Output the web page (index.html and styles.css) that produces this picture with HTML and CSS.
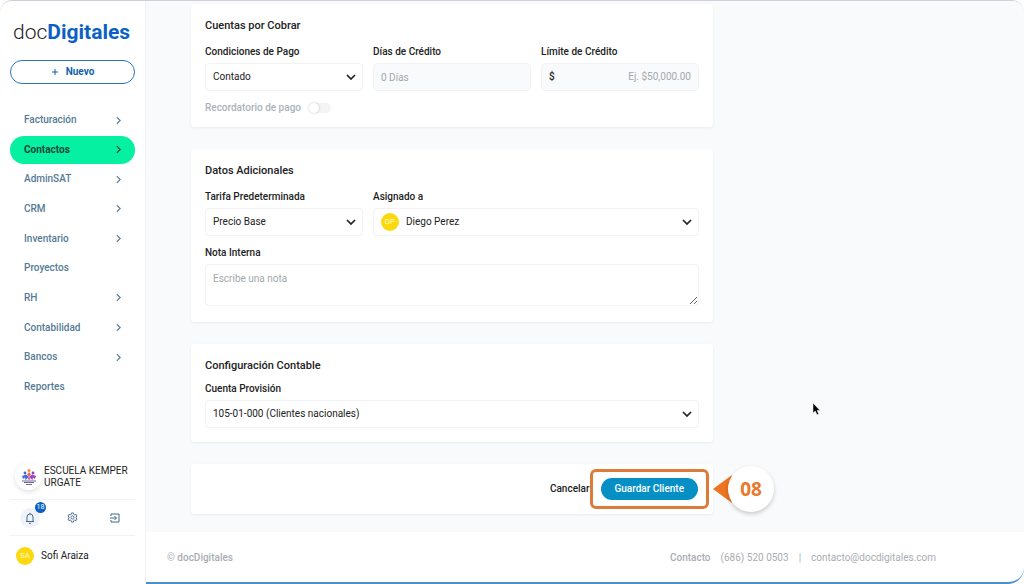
FILE: index.html
```html
<!DOCTYPE html>
<html lang="es">
<head>
  <meta charset="UTF-8">
  <meta name="viewport" content="width=device-width, initial-scale=1.0">
  <title>docDigitales</title>
  <link rel="stylesheet" href="styles.css">
</head>
<body>
  <div class="app">
    <aside class="sidebar">
      <a href="#" class="logo">doc<b>Digitales</b></a>
      <button type="button" class="new-btn">
        <svg width="8" height="8" viewBox="0 0 8 8"><path d="M4 1v6M1 4h6"/></svg>
        Nuevo
      </button>

      <nav class="menu">
        <a href="#" class="menu-item">Facturación <svg class="chevron" viewBox="0 0 6 10"><path d="M1 1l4 4-4 4"/></svg></a>
        <a href="#" class="menu-item active">Contactos <svg class="chevron" viewBox="0 0 6 10"><path d="M1 1l4 4-4 4"/></svg></a>
        <a href="#" class="menu-item">AdminSAT <svg class="chevron" viewBox="0 0 6 10"><path d="M1 1l4 4-4 4"/></svg></a>
        <a href="#" class="menu-item">CRM <svg class="chevron" viewBox="0 0 6 10"><path d="M1 1l4 4-4 4"/></svg></a>
        <a href="#" class="menu-item">Inventario <svg class="chevron" viewBox="0 0 6 10"><path d="M1 1l4 4-4 4"/></svg></a>
        <a href="#" class="menu-item">Proyectos</a>
        <a href="#" class="menu-item">RH <svg class="chevron" viewBox="0 0 6 10"><path d="M1 1l4 4-4 4"/></svg></a>
        <a href="#" class="menu-item">Contabilidad <svg class="chevron" viewBox="0 0 6 10"><path d="M1 1l4 4-4 4"/></svg></a>
        <a href="#" class="menu-item">Bancos <svg class="chevron" viewBox="0 0 6 10"><path d="M1 1l4 4-4 4"/></svg></a>
        <a href="#" class="menu-item">Reportes</a>
      </nav>

      <div class="company">
        <span class="company-logo">
          <svg width="14" height="16" viewBox="0 0 14 16">
            <circle cx="7" cy="1.500" r="1.500" fill="#f0913c"/>
            <circle cx="3" cy="4" r="1.400" fill="#4a63d8"/>
            <circle cx="11" cy="4" r="1.400" fill="#8a3fc0"/>
            <path d="M7 3l2 2.500L7 8 5 5.500z" fill="#e9694a"/>
            <path d="M0 7l4-1.500L7 8l-3.500 3L3 8.500 1 10z" fill="#3f6fe0"/>
            <path d="M14 7l-4-1.500L7 8l3.500 3 .5-2.500 2 1.500z" fill="#a83cc4"/>
            <path d="M7 8l1.500 2.500h-3z" fill="#e0457c"/>
            <path d="M0 11.500h14v1H0zM2 13h10v1H2zM4 15h6v1H4z" fill="#6d6898"/>
          </svg>
        </span>
        <span class="company-name">ESCUELA KEMPER URGATE</span>
      </div>

      <div class="tools">
        <button type="button" class="tool bell" aria-label="Notificaciones">
          <svg width="10" height="12" viewBox="0 0 10 12"><path d="M1 9.500h8M2 9.500V5a3 3 0 0 1 6 0v4.500M5 2V.8M4 11.300h2"/></svg>
          <span class="badge">18</span>
        </button>
        <button type="button" class="tool" aria-label="Ajustes">
          <svg width="11" height="11" viewBox="0 0 24 24"><g stroke-width="2"><circle cx="12" cy="12" r="3.500"/><path d="M10 2h4l.6 3 2.400 1.400 2.900-1 2 3.400-2.300 2v2.400l2.300 2-2 3.400-2.900-1-2.400 1.400-.6 3h-4l-.6-3L7 17.600l-2.900 1-2-3.400 2.300-2v-2.400l-2.300-2 2-3.400 2.900 1L9.400 5z"/></g></svg>
        </button>
        <button type="button" class="tool" aria-label="Salir">
          <svg width="10" height="10" viewBox="0 0 10 10"><path d="M1 3V1h8v8H1V7M0 5h6M4.500 3l2 2-2 2"/></svg>
        </button>
      </div>

      <div class="user">
        <span class="avatar">SA</span>
        <span>Sofi Araiza</span>
      </div>
    </aside>

    <div class="content">
      <main class="main">
        <form class="form">
          <section class="card">
            <h2 class="card-title">Cuentas por Cobrar</h2>
            <div class="grid">
              <div class="field">
                <label for="condiciones">Condiciones de Pago</label>
                <div class="select-wrap">
                  <select id="condiciones" class="control"><option>Contado</option></select>
                  <svg class="arrow" viewBox="0 0 10 6"><path d="M1 1l4 4 4-4"/></svg>
                </div>
              </div>
              <div class="field">
                <label for="dias">Días de Crédito</label>
                <input id="dias" class="control" type="text" placeholder="0 Días" disabled>
              </div>
              <div class="field">
                <label for="limite">Límite de Crédito</label>
                <div class="control money">
                  <span>$</span>
                  <input id="limite" type="text" placeholder="Ej. $50,000.00" disabled>
                </div>
              </div>
            </div>
            <div class="reminder">
              <label for="recordatorio">Recordatorio de pago</label>
              <input id="recordatorio" class="switch" type="checkbox" disabled>
            </div>
          </section>

          <section class="card">
            <h2 class="card-title">Datos Adicionales</h2>
            <div class="grid">
              <div class="field">
                <label for="tarifa">Tarifa Predeterminada</label>
                <div class="select-wrap">
                  <select id="tarifa" class="control"><option>Precio Base</option></select>
                  <svg class="arrow" viewBox="0 0 10 6"><path d="M1 1l4 4 4-4"/></svg>
                </div>
              </div>
              <div class="field wide">
                <label for="asignado">Asignado a</label>
                <div class="select-wrap with-avatar">
                  <span class="avatar">DP</span>
                  <select id="asignado" class="control"><option>Diego Perez</option></select>
                  <svg class="arrow" viewBox="0 0 10 6"><path d="M1 1l4 4 4-4"/></svg>
                </div>
              </div>
              <div class="field full">
                <label for="nota">Nota Interna</label>
                <textarea id="nota" class="control note" placeholder="Escribe una nota"></textarea>
              </div>
            </div>
          </section>

          <section class="card compact">
            <h2 class="card-title">Configuración Contable</h2>
            <div class="field">
              <label for="cuenta">Cuenta Provisión</label>
              <div class="select-wrap">
                <select id="cuenta" class="control"><option>105-01-000 (Clientes nacionales)</option></select>
                <svg class="arrow" viewBox="0 0 10 6"><path d="M1 1l4 4 4-4"/></svg>
              </div>
            </div>
          </section>

          <section class="card actions">
            <button type="button" class="cancel-btn">Cancelar</button>
            <div class="highlight">
              <button type="submit" class="save-btn">Guardar Cliente</button>
            </div>
            <div class="step">
              <svg class="step-arrow" width="20" height="28" viewBox="0 0 20 28"><path d="M0 14L19 0q-4 14 0 28z"/></svg>
              <span class="step-number">08</span>
            </div>
          </section>
        </form>

        <svg class="cursor" width="10" height="14" viewBox="0 0 10 14"><path d="M1 1v10l2.300-2 1.700 3.800 1.800-.8-1.700-3.600H8z"/></svg>
      </main>

      <footer class="footer">
        <strong>© docDigitales</strong>
        <div class="contact">
          <strong>Contacto</strong>
          <span>(686) 520 0503</span>
          <span>|</span>
          <a href="mailto:contacto@docdigitales.com">contacto@docdigitales.com</a>
        </div>
      </footer>
    </div>
  </div>
</body>
</html>
```
FILE: styles.css
```css
* {
  margin: 0;
  padding: 0;
  box-sizing: border-box;
}

body {
  font-family: Roboto, sans-serif;
  font-size: 10px;
  line-height: 14px;
  background: #fff;
  color: #222;
}

button,
input,
select,
textarea {
  font: inherit;
  color: inherit;
}

button {
  border: none;
  background: none;
  cursor: pointer;
}

a {
  color: inherit;
  text-decoration: none;
}

svg {
  fill: none;
  stroke: currentColor;
}

.app {
  display: flex;
  min-height: 100vh;
  border-top: 1px solid #d0cfdb;
  border-radius: 12px;
}

/* Sidebar */
.sidebar {
  display: flex;
  flex-direction: column;
  flex: 0 0 146px;
  padding: 15px 10px 14px;
  border-right: 1px solid #f0f2f4;
}

.logo {
  padding-left: 3px;
  font-size: 21px;
  font-weight: 300;
  line-height: 32px;
  white-space: nowrap;
}

.logo b {
  color: #0b61c3;
  font-weight: 700;
}

.new-btn {
  display: flex;
  align-items: center;
  justify-content: center;
  gap: 7px;
  height: 24px;
  margin-top: 12px;
  border: 1px solid #2f73b8;
  border-radius: 12px;
  color: #1262ae;
  font-weight: 700;
}

.menu {
  display: flex;
  flex: 1;
  flex-direction: column;
  justify-content: space-between;
  margin: 22px 0 62px;
}

.menu-item {
  display: flex;
  align-items: center;
  justify-content: space-between;
  height: 28px;
  padding: 0 14px;
  border-radius: 14px;
  color: #557a96;
  font-weight: 500;
}

.menu-item.active {
  background: #05f0a0;
  color: #10453a;
  font-weight: 700;
}

.chevron {
  width: 5px;
  height: 9px;
  stroke-width: 1.4;
}

.company {
  display: flex;
  align-items: center;
  gap: 2px;
  padding: 0 0 9px 5px;
  line-height: 12px;
}

.company-logo {
  display: flex;
  flex: none;
  align-items: center;
  justify-content: center;
  width: 27px;
  height: 27px;
  border-radius: 50%;
  box-shadow: 0 2px 5px rgba(0, 0, 0, 0.12);
}

.company-logo svg {
  stroke: none;
}

.tools {
  display: flex;
  align-items: center;
  justify-content: space-between;
  height: 37px;
  padding: 0 10px;
  border-top: 1px solid #f0f2f4;
  border-bottom: 1px solid #f0f2f4;
}

.tool {
  display: flex;
  position: relative;
  align-items: center;
  justify-content: center;
  width: 20px;
  height: 20px;
  border-radius: 50%;
  color: #3f6a8e;
}

.bell {
  background: #eff3f8;
}

.badge {
  position: absolute;
  top: -6px;
  right: -6px;
  width: 11px;
  height: 11px;
  border-radius: 50%;
  background: #0b61c3;
  color: #fff;
  font-size: 7px;
  line-height: 11px;
}

.user {
  display: flex;
  align-items: center;
  gap: 7px;
  padding: 11px 0 5px 6px;
}

.avatar {
  flex: none;
  width: 18px;
  height: 18px;
  border-radius: 50%;
  background: #fbd90e;
  color: #fff8c8;
  font-size: 8px;
  line-height: 18px;
  text-align: center;
}

/* Form */
.content {
  display: flex;
  flex: 1;
  flex-direction: column;
}

.main {
  position: relative;
  flex: 1;
  padding: 3px 45px 18px;
  border-top-right-radius: 12px;
  background: #f8fafc;
}

.form {
  display: flex;
  flex-direction: column;
  gap: 22px;
  max-width: 522px;
}

.card {
  padding: 13px 14px 12px;
  border-radius: 4px;
  background: #fff;
  box-shadow: 0 1px 3px rgba(40, 60, 80, 0.07);
}

.card-title {
  margin-bottom: 10px;
  font-size: 11px;
  font-weight: 500;
  line-height: 18px;
}

.compact {
  padding-bottom: 14px;
}

.compact .card-title {
  margin-bottom: 7px;
}

.grid {
  display: grid;
  grid-template-columns: repeat(3, 1fr);
  gap: 10px;
}

.wide {
  grid-column: span 2;
}

.full {
  grid-column: span 3;
}

.field label {
  display: block;
  margin-bottom: 4px;
  font-weight: 500;
}

.control {
  display: block;
  width: 100%;
  height: 28px;
  padding: 0 7px;
  border: 1px solid #f0f2f4;
  border-radius: 4px;
  background: #fff;
  appearance: none;
}

input.control:disabled,
.money {
  background: #f8fafb;
}

::placeholder {
  color: #a3a8ad;
  opacity: 1;
}

.select-wrap {
  position: relative;
}

.arrow {
  position: absolute;
  top: 11px;
  right: 7px;
  width: 10px;
  height: 6px;
  stroke-width: 1.7;
  pointer-events: none;
}

.with-avatar .avatar {
  position: absolute;
  top: 5px;
  left: 8px;
}

.with-avatar .control {
  padding-left: 32px;
}

.money {
  display: flex;
  align-items: center;
  font-weight: 500;
}

.money input {
  flex: 1;
  min-width: 0;
  border: none;
  background: none;
  font-weight: 400;
  text-align: right;
}

.note {
  height: 42px;
  margin-bottom: 4px;
  padding: 7px;
  resize: vertical;
}

.reminder {
  display: flex;
  align-items: center;
  gap: 8px;
  margin-top: 10px;
  color: #a9b3bc;
  font-weight: 500;
}

.switch {
  width: 22px;
  height: 10px;
  border-radius: 5px;
  background: #f3f4f5;
  appearance: none;
}

.switch::before {
  content: "";
  display: block;
  width: 10px;
  height: 10px;
  border-radius: 50%;
  background: #fff;
  box-shadow: 0 0 3px rgba(0, 0, 0, 0.2);
}

.actions {
  display: flex;
  position: relative;
  align-items: center;
  justify-content: flex-end;
  height: 50px;
  padding: 0 4px;
}

.cancel-btn {
  font-weight: 500;
}

.highlight {
  padding: 6px 8px;
  border: 3px solid #de7b38;
  border-radius: 6px;
}

.save-btn {
  height: 22px;
  padding: 0 14px;
  border-radius: 11px;
  background: #058fc5;
  color: #fff;
  font-weight: 500;
}

/* Step marker */
.step {
  display: flex;
  position: absolute;
  top: 2px;
  left: 100%;
  align-items: center;
}

.step-arrow {
  flex: none;
  margin-right: -5px;
  fill: #ed7420;
  stroke: none;
}

.step-number {
  width: 46px;
  height: 46px;
  border-radius: 50%;
  background: #fff;
  box-shadow: 0 2px 4px rgba(0, 0, 0, 0.2);
  color: #e8792d;
  font-family: "Open Sans", sans-serif;
  font-size: 19px;
  font-weight: 700;
  line-height: 46px;
  text-align: center;
}

.cursor {
  position: absolute;
  top: 401px;
  left: 666px;
  fill: #000;
  stroke: #fff;
  stroke-width: 0.5;
}

/* Footer */
.footer {
  display: flex;
  align-items: center;
  justify-content: space-between;
  height: 52px;
  padding: 1px 88px 0 21px;
  border-bottom: 2px solid #4a90cc;
  border-bottom-right-radius: 16px;
  color: #a9adb3;
}

.footer strong {
  font-weight: 500;
}

.contact {
  display: flex;
  gap: 10px;
}
```
